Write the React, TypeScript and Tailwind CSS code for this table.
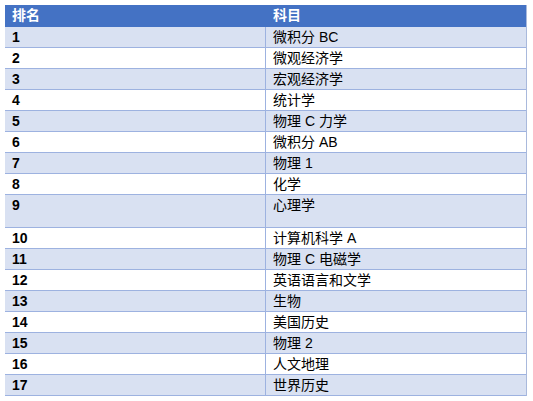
const rows: [string, string][] = [
  ['1', '微积分 BC'],
  ['2', '微观经济学'],
  ['3', '宏观经济学'],
  ['4', '统计学'],
  ['5', '物理 C 力学'],
  ['6', '微积分 AB'],
  ['7', '物理 1'],
  ['8', '化学'],
  ['9', '心理学'],
  ['10', '计算机科学 A'],
  ['11', '物理 C 电磁学'],
  ['12', '英语语言和文学'],
  ['13', '生物'],
  ['14', '美国历史'],
  ['15', '物理 2'],
  ['16', '人文地理'],
  ['17', '世界历史'],
]

export default function App() {
  return (
    <div className="w-[533px] h-[401px] bg-white pt-[5px] pl-[5px] font-['Liberation_Sans','Noto_Sans_CJK_SC',sans-serif] text-[14px] text-black">
      <div className="w-[522px] border-r border-[#a9b9dc]">
        <div className="flex h-[22px] bg-[#4472c4] text-white font-bold">
          <div className="w-[260px] pl-[7px] leading-[20px]">排名</div>
          <div className="flex-1 pl-[8px] leading-[20px]">科目</div>
        </div>
        {rows.map(([rank, subject], i) => (
          <div
            key={rank}
            className={`flex border-b border-[#9db2e0] ${i % 2 === 0 ? 'bg-[#d9e1f2]' : 'bg-white'} ${rank === '9' ? 'h-[33px]' : 'h-[21px]'}`}
          >
            <div className="w-[260px] pl-[7px] font-bold leading-[20px]">{rank}</div>
            <div className="flex-1 border-l border-[#9db2e0] pl-[7px] leading-[20px]">{subject}</div>
          </div>
        ))}
      </div>
    </div>
  )
}
